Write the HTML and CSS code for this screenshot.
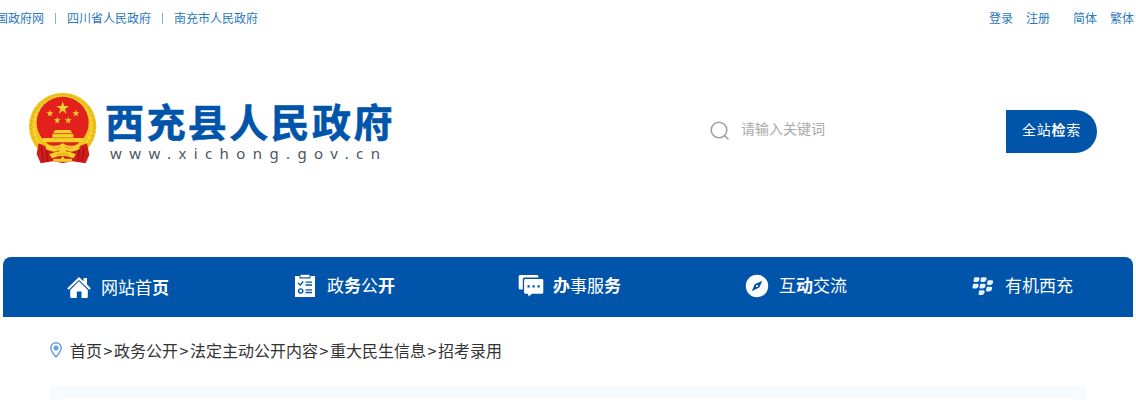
FILE: index.html
```html
<!DOCTYPE html>
<html lang="zh-CN">
	<head>
		<meta charset="utf-8">
		<title>西充县人民政府</title>
		<link rel="stylesheet" href="styles.css">
	</head>

	<body>
		<div class="topbar">
			<div class="links">
				<a>中国政府网</a><i></i><a>四川省人民政府</a><i></i><a>南充市人民政府</a>
			</div>
			<div class="tools">
				<a>登录</a><a>注册</a><a class="lang">简体</a><a>繁体</a>
			</div>
		</div>

		<div class="header">
			<svg class="emblem" viewBox="27 22 204 216">
				<circle cx="128" cy="125" r="101" fill="#f0c51d"/>
				<circle cx="128" cy="125" r="95" fill="none" stroke="#e0a818" stroke-width="3" stroke-dasharray="7 6"/>
				<circle cx="128" cy="125" r="86" fill="none" stroke="#f9dd45" stroke-width="5" stroke-dasharray="10 5"/>
				<circle cx="128" cy="114" r="78" fill="#e2211c"/>
				<path d="M56 176 L90 190 L128 184 L166 190 L201 176 L208 210 L197 236 L157 230 L128 235 L99 230 L62 236 L50 208Z" fill="#cf1d1c"/>
				<path d="M64 188 L70 231 M80 194 L82 231 M178 194 L174 231 M192 188 L186 231" stroke="#97100f" stroke-width="3"/>
				<g fill="#f8d02b">
					<path id="star" d="M128 50 L132.500 64 L147 64 L135 73 L139.500 87 L128 78.500 L116.500 87 L121 73 L109 64 L123.500 64Z"/>
					<use href="#star" transform="translate(18 47) scale(.56)"/>
					<use href="#star" transform="translate(96 47) scale(.56)"/>
					<use href="#star" transform="translate(40 68) scale(.56)"/>
					<use href="#star" transform="translate(73 68) scale(.56)"/>
					<path d="M103 138 L108 136 H148 L153 138 L156 146 H100Z"/>
					<path d="M97 148 H160 V159 H97Z M68 160 H189 V173 H68Z"/>
					<path d="M76 178 Q108 190 128 176 Q148 190 180 178 L178 194 Q152 207 141 197 L128 206 L115 197 Q104 207 78 194Z"/>
					<path d="M88 209 Q128 188 168 209 L160 221 Q128 206 96 221Z M100 222 H122 L128 214 L134 222 H156 V231 H100Z"/>
				</g>
				<path d="M99 147.500 H157 M97 160 H160 M100 188 Q112 194 122 187 M134 187 Q146 194 158 188 M108 212 Q128 202 148 212" fill="none" stroke="#d68d13" stroke-width="2"/>
			</svg>
			<div class="site">
				<h1>西充县人民政府</h1>
				<p>www.xichong.gov.cn</p>
			</div>
			<div class="search">
				<svg class="glass" viewBox="0 0 20 20" fill="none" stroke="#a0a0a0" stroke-width="1.600">
					<circle cx="9" cy="9" r="7.800"/>
					<path d="M14.500 14.500 L18.500 18.500"/>
				</svg>
				<span class="placeholder">请输入关键词</span>
				<div class="button">全站<b>检</b>索</div>
			</div>
		</div>

		<div class="nav">
			<a class="home">
				<svg viewBox="0 0 24 24" fill="#fff">
					<path d="M12 1 L16.500 5.300 V2 H20 V8.600 L23.800 12.300 L22.300 13.800 L12 3.900 L1.700 13.800 L.2 12.300Z"/>
					<path d="M12 5.200 L20.800 14 V21 Q20.800 22 19.800 22 H14.500 V15.500 H9.800 V22 H4.200 Q3.200 22 3.200 21 V14Z"/>
				</svg>
				<span>网站首<b>页</b></span>
			</a>
			<a>
				<svg viewBox="0 0 24 24">
					<path d="M2 2 H6.500 V4.500 H17.500 V2 H22 V23 H2Z" fill="#fff"/>
					<path d="M7.500 .8 H16.500 V3.300 H7.500Z" fill="#fff"/>
					<path d="M5 9 L7.300 11 L10.200 7.500 M12.500 8.200 H19 M12.500 11 H19 M12.500 15.800 H19 M12.500 18.500 H19" fill="none" stroke="#0054a9" stroke-width="1.300"/>
					<circle cx="7.700" cy="17" r="2.100" fill="none" stroke="#0054a9" stroke-width="1.400"/>
				</svg>
				<span>政<b>务</b>公<b>开</b></span>
			</a>
			<a>
				<svg viewBox="0 0 24 24" fill="#fff">
					<path d="M1 1 H18 Q19.500 1 19.500 2.500 V3.600 H5.500 Q3.800 3.600 3.800 5.300 V15.500 H1 Q-.3 15.500 -.3 14 V2.500 Q-.3 1 1 1Z"/>
					<path d="M6.500 5 H23 Q24.300 5 24.300 6.300 V18.500 Q24.300 19.800 23 19.800 H13 L9.800 22.500 L8.800 19.800 H6.500 Q5.100 19.800 5.100 18.500 V6.300 Q5.100 5 6.500 5Z"/>
					<path d="M8.500 11.300 h2.200 v2.200 h-2.200Z M13.500 11.300 h2.200 v2.200 h-2.200Z M18.500 11.300 h2.200 v2.200 h-2.200Z" fill="#0054a9"/>
				</svg>
				<span><b>办</b>事服<b>务</b></span>
			</a>
			<a>
				<svg viewBox="0 0 24 24">
					<circle cx="12" cy="12" r="11.200" fill="#fff"/>
					<path d="M17.300 6.700 L14.300 13.500 L6.700 17.300 L9.700 10.200Z" fill="#0054a9"/>
					<circle cx="12" cy="12" r="1.100" fill="#fff"/>
				</svg>
				<span>互<b>动</b>交流</span>
			</a>
			<a>
				<svg viewBox="0 0 24 24" fill="#e8f2fb">
					<path id="seed" d="M3.800 3.200 H7.200 Q9.200 3.300 8.600 5.500 Q8 7.900 6 7.900 H3.300 Q2.300 7.900 2.500 6.800 L3 4Z"/>
					<use href="#seed" x="7"/>
					<use href="#seed" x="-1" y="6.500"/>
					<use href="#seed" x="6" y="6.500"/>
					<use href="#seed" x="13.500" y="3"/>
					<use href="#seed" x="12.500" y="9.500"/>
					<use href="#seed" x="5" y="13"/>
				</svg>
				<span>有机西充</span>
			</a>
		</div>

		<div class="crumbs">
			<svg viewBox="0 0 12 16" fill="none" stroke="#65a2df" stroke-width="1.500">
				<path d="M6 15 Q.8 9 .8 6 A5.200 5.200 0 0 1 11.200 6 Q11.200 9 6 15Z"/>
				<circle cx="6" cy="6" r="1.800" fill="#65a2df"/>
			</svg>
			<a>首页</a><i>&gt;</i><a>政务公开</a><i>&gt;</i><a>法定主动公开内容</a><i>&gt;</i><a>重大民生信息</a><i>&gt;</i><a>招考录用</a>
		</div>

		<div class="content">
			<div class="article"></div>
		</div>
	</body>
</html>
```
FILE: styles.css
```css
html, body {
	margin: 0;
	padding: 0;
	overflow: hidden;
	background: #fff;
	font-family: "Noto Sans CJK SC", sans-serif;
}

.topbar {
	display: flex;
	justify-content: space-between;
	height: 36px;
	font-size: 12px;
	line-height: 35px;
	color: #2b78be;
}

.links {
	display: flex;
	align-items: center;
	height: 35px;
	margin-left: -16px;
}

.links i {
	width: 1px;
	height: 11px;
	margin: 1px 11px 0;
	background: #81b1db;
}

.tools {
	display: flex;
	gap: 13px;
	margin-right: 2px;
}

.lang {
	margin-left: 10px;
}

.header {
	display: flex;
	height: 165px;
	padding: 56px 39px 0 29px;
}

.emblem {
	width: 68px;
	height: 72px;
}

.site {
	margin-left: 8px;
	width: 300px;
	white-space: nowrap;
}

h1 {
	margin: 7px 0 0 0;
	font-size: 39px;
	line-height: 43px;
	letter-spacing: 2.4px;
	color: #0054a9;
	-webkit-text-stroke: 0.6px #0054a9;
}

.site p {
	margin: 2px 0 0 5px;
	font-family: "Noto Sans", sans-serif;
	font-size: 15px;
	line-height: 18px;
	letter-spacing: 7.4px;
	color: #4b5560;
}

.search {
	display: flex;
	align-items: center;
	width: 387px;
	height: 43px;
	margin: 18px 0 0 auto;
}

.glass {
	width: 20px;
	height: 20px;
	margin-bottom: 1px;
}

.placeholder {
	margin: 0 0 7px 11px;
	font-size: 14px;
	line-height: 20px;
	color: #a9a9a9;
}

.button {
	width: 91px;
	height: 43px;
	margin-left: auto;
	border-radius: 0 22px 22px 0;
	background: #0054a9;
	font-size: 14px;
	line-height: 39px;
	letter-spacing: 0.7px;
	text-align: center;
	color: #fff;
}

.nav {
	display: flex;
	height: 60px;
	margin: 0 3px;
	border-radius: 8px 8px 0 0;
	background: #0054a9;
	color: #fff;
}

.nav a {
	display: flex;
	flex: 1;
	justify-content: center;
	align-items: center;
	gap: 10px;
	height: 57px;
	padding-left: 4px;
	font-size: 17px;
	line-height: 24px;
}

.nav .home {
	height: 62px;
}

.nav span {
	margin-bottom: 2px;
}

.nav svg {
	width: 24px;
	height: 24px;
	overflow: visible;
}

.crumbs {
	display: flex;
	align-items: center;
	height: 69px;
	padding-left: 50px;
	font-size: 16px;
	line-height: 24px;
	color: #333;
}

.crumbs a, .crumbs i {
	margin-bottom: 3px;
}

.crumbs i {
	width: 12px;
	font-style: normal;
	text-align: center;
}

.crumbs svg {
	width: 12px;
	height: 16px;
	margin: 0 8px 3px 0;
}

.content {
	margin: 0 50px;
	padding: 12px 12px 0;
	background: #f7faff;
}

.article {
	height: 2px;
	background: #fff;
}
```
